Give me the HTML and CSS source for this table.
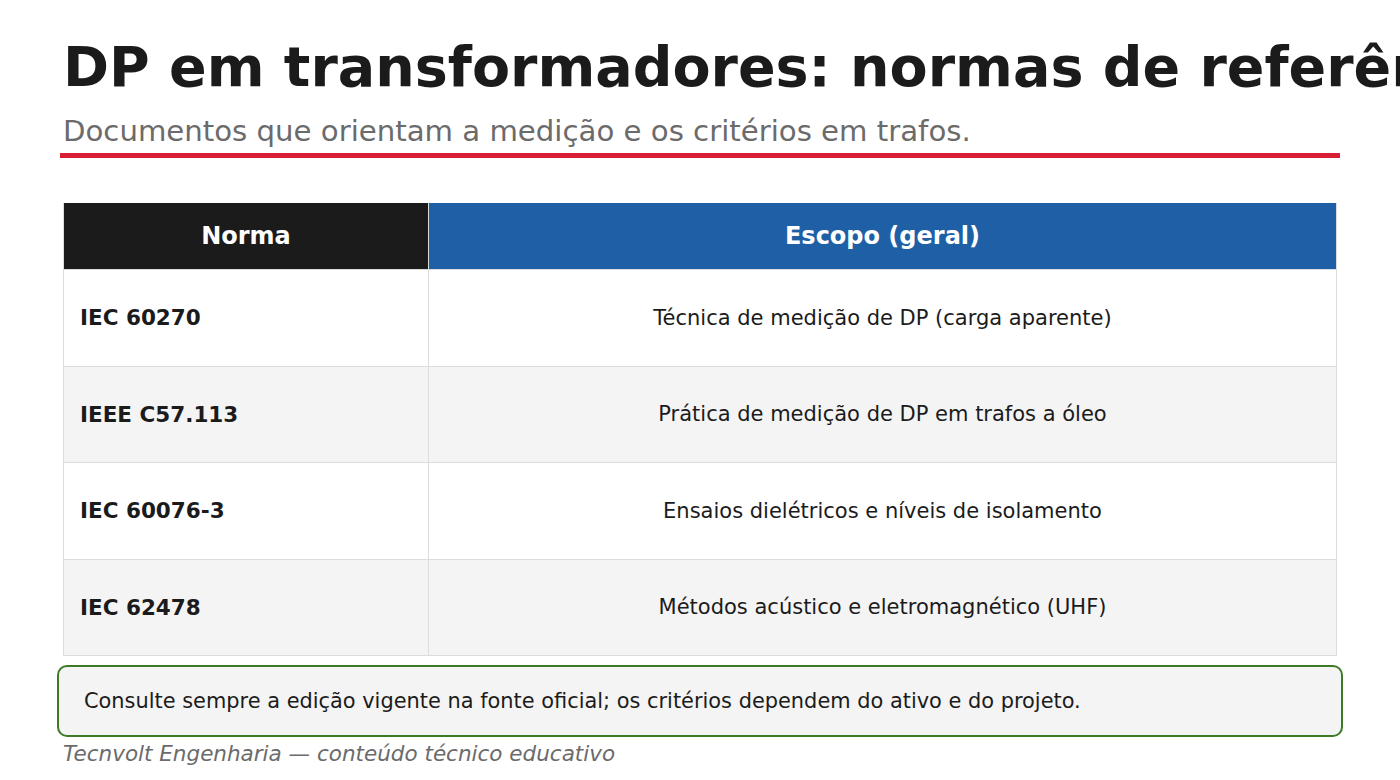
FILE: index.html
```html
<!DOCTYPE html>
<html lang="pt">
<head>
<meta charset="utf-8">
<title>DP em transformadores</title>
<link rel="stylesheet" href="styles.css">
</head>
<body>
<main class="slide">
  <header class="head">
    <h1 class="title">DP em transformadores: normas de referência</h1>
    <p class="subtitle">Documentos que orientam a medição e os critérios em trafos.</p>
    <div class="rule"></div>
  </header>
  <table class="norms">
    <thead>
      <tr>
        <th class="col-norma">Norma</th>
        <th class="col-escopo">Escopo (geral)</th>
      </tr>
    </thead>
    <tbody>
      <tr><td class="norma">IEC 60270</td><td class="escopo">Técnica de medição de DP (carga aparente)</td></tr>
      <tr class="alt"><td class="norma">IEEE C57.113</td><td class="escopo">Prática de medição de DP em trafos a óleo</td></tr>
      <tr><td class="norma">IEC 60076-3</td><td class="escopo">Ensaios dielétricos e níveis de isolamento</td></tr>
      <tr class="alt"><td class="norma">IEC 62478</td><td class="escopo">Métodos acústico e eletromagnético (UHF)</td></tr>
    </tbody>
  </table>
  <div class="note">Consulte sempre a edição vigente na fonte oficial; os critérios dependem do ativo e do projeto.</div>
  <footer class="foot">Tecnvolt Engenharia — conteúdo técnico educativo</footer>
</main>
</body>
</html>
```
FILE: styles.css
```css
html, body {
  margin: 0;
  padding: 0;
  background: #ffffff;
  overflow: hidden;
}
body {
  width: 1400px;
  height: 780px;
  font-family: "DejaVu Sans", sans-serif;
  color: #1b1b1b;
}
.slide {
  padding: 33px 63px 0 63px;
  display: flex;
  flex-direction: column;
}
.head {
  display: flex;
  flex-direction: column;
}
.title {
  margin: 0;
  font-size: 55.5px;
  line-height: 67px;
  font-weight: 700;
  color: #1b1b1b;
  white-space: nowrap;
  overflow: hidden;
  margin-right: -63px;
}
.subtitle {
  margin: 14px 0 0 0;
  font-size: 29.2px;
  line-height: 34px;
  color: #6b6b6b;
  white-space: nowrap;
}
.rule {
  margin: 5px -3px 0 -3px;
  height: 5px;
  background: #d81e34;
}
.norms {
  margin-top: 45px;
  width: 100%;
  border-collapse: collapse;
  table-layout: fixed;
}
.norms th {
  height: 66px;
  padding: 0;
  font-size: 24px;
  font-weight: 700;
  color: #ffffff;
  text-align: center;
  border: 1px solid #dcdcdc;
  border-top: none;
}
.col-norma {
  width: 364px;
  background: #1b1b1b;
}
.col-escopo {
  background: #1f5fa6;
}
.norms td {
  height: 95.5px;
  padding: 0;
  font-size: 21px;
  border: 1px solid #dcdcdc;
}
.norms tr.alt td {
  background: #f4f4f4;
}
.norma {
  font-weight: 700;
  font-size: 21.5px !important;
  padding-left: 16px !important;
  text-align: left;
}
.escopo {
  text-align: center;
}
.note {
  margin: 9px -6px 0 -6px;
  height: 68px;
  display: flex;
  align-items: center;
  padding: 0 25px;
  border: 2px solid #3d7a25;
  border-radius: 10px;
  background: #f4f4f4;
  font-size: 20.9px;
  color: #1b1b1b;
}
.foot {
  margin-top: 5px;
  font-size: 21.5px;
  line-height: 24px;
  font-style: italic;
  color: #6b6b6b;
}
```
